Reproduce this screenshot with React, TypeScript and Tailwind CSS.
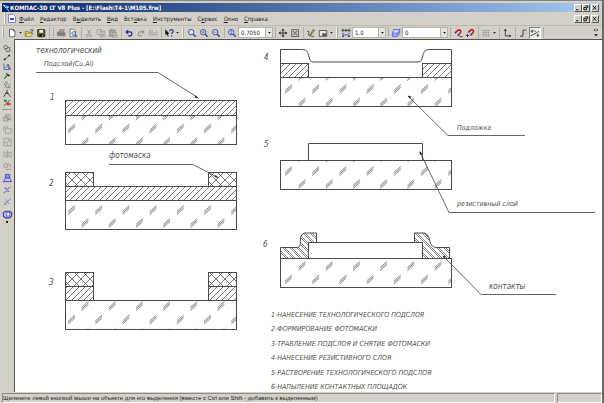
import type { ReactNode } from "react";

const UI = "font-['DejaVu_Sans_Condensed','Liberation_Sans',sans-serif]";

type IconName = keyof typeof icons;

const lens = (
  <>
    <circle cx="5" cy="5" r="3.2" fill="#dfeaf8" stroke="#2747a8" strokeWidth="1.1" />
    <path d="M7.4 7.4L10.4 10.4" stroke="#2747a8" strokeWidth="1.7" />
  </>
);

const icons = {
  create: <path d="M3 1.5h4.5l2 2v7H3zM7.5 1.5v2h2" fill="#fff" stroke="#444" strokeWidth=".9" />,
  open: (
    <>
      <path d="M1.5 10V4h3l1 1h4v1.5" fill="#e9d36b" stroke="#6b5a13" strokeWidth=".8" />
      <path d="M1.5 10L3.7 6.3h7L8.6 10z" fill="#f5e58b" stroke="#6b5a13" strokeWidth=".8" />
      <path d="M7 2.5c1.5-1.2 2.8-.6 3.2.8M10.6 1.6v2H8.8" stroke="#333" strokeWidth=".7" />
    </>
  ),
  save: (
    <>
      <path d="M2 2h8.5v8.5H3L2 9.5z" fill="#5c6620" stroke="#111" strokeWidth=".9" />
      <path d="M4 2.4h4.6v3.3H4z" fill="#eee" />
      <path d="M4 7.4h5v2.8H4z" fill="#111" />
      <path d="M7.4 8h1v1.8h-1z" fill="#ddd" />
    </>
  ),
  print: (
    <>
      <path d="M4 5l1-3h5L9 5" fill="#aaa69f" stroke="#77746e" strokeWidth=".8" />
      <path d="M1.5 5h8.3l1.2 1.4v3H2L1.5 8.6z" fill="#85827c" stroke="#6d6a65" strokeWidth=".6" />
    </>
  ),
  preview: (
    <>
      <path d="M2.5 1.5h4.5l2 2v7H2.5z" fill="#fff" stroke="#444" strokeWidth=".8" />
      <circle cx="6.8" cy="6.6" r="2.3" fill="#bfe0ef" stroke="#235b96" strokeWidth=".9" />
      <path d="M8.4 8.3l2.4 2.4" stroke="#235b96" strokeWidth="1.4" />
    </>
  ),
  cut: (
    <g stroke="#99958d" strokeWidth=".9">
      <path d="M4 1.5L7.4 8M8 1.5L4.6 8" />
      <circle cx="4" cy="9.2" r="1.3" />
      <circle cx="8" cy="9.2" r="1.3" />
    </g>
  ),
  copy: (
    <g fill="#d4d0c8" stroke="#918d86" strokeWidth=".8">
      <path d="M1.5 2h5v6h-5z" />
      <path d="M5 4h5.5v6.5H5zM6.3 6h3M6.3 7.4h3M6.3 8.8h3" />
    </g>
  ),
  paste: (
    <g stroke="#8b8780" strokeWidth=".8">
      <path d="M1.7 2.5h7v7.5h-7z" fill="#aaa69e" />
      <path d="M3.5 1.5h3.4v2H3.5z" fill="#d4d0c8" />
      <path d="M5.5 5.5h5V11h-5zM6.6 7.4h2.8M6.6 9h2.8" fill="#d4d0c8" />
    </g>
  ),
  undo: (
    <>
      <path d="M4 4.6h3.4c2.6 0 2.6 4.8 0 4.8H5" stroke="#1f2fa8" strokeWidth="1.7" />
      <path d="M1.4 4.7L5 1.6v6.2z" fill="#1f2fa8" />
    </>
  ),
  redo: (
    <>
      <path d="M8 4.6H4.8c-2.6 0-2.6 4.8 0 4.8H7" stroke="#96928b" strokeWidth="1.3" />
      <path d="M10.6 4.7L7.2 2v5.6z" fill="#96928b" />
    </>
  ),
  fx: (
    <g stroke="#96928b" strokeWidth=".9">
      <path d="M3.6 2.2C2 1.8 2.2 3.6 2 10M.8 5h2.6M5.4 3c-1.2 2-1.2 5 0 7M6.4 5.2l2.4 3.4M8.8 5.2L6.4 8.6M9.8 3c1.2 2 1.2 5 0 7" />
    </g>
  ),
  help: (
    <>
      <path d="M1.6 1.5v7.2l1.7-1.5 1.2 3 1.2-.6-1.2-2.8h2.1z" fill="#111" />
      <path d="M7 3.8c0-2.6 4-2.4 4 0 0 1.6-1.9 1.6-1.9 3.4" stroke="#2747a8" strokeWidth="1.4" />
      <path d="M8.4 8.6h1.5v1.5H8.4z" fill="#2747a8" />
    </>
  ),
  zoomFrame: lens,
  zoomIn: (
    <>
      {lens}
      <path d="M3.4 5h3.2M5 3.4v3.2" stroke="#b02030" strokeWidth=".9" />
    </>
  ),
  zoomOut: (
    <>
      {lens}
      <path d="M3.4 5h3.2" stroke="#b02030" strokeWidth=".9" />
    </>
  ),
  zoomScale: (
    <>
      {lens}
      <path d="M5 3v4M3.8 4.2L5 3l1.2 1.2M3.8 5.8L5 7l1.2-1.2" stroke="#2747a8" strokeWidth=".8" />
    </>
  ),
  pan: (
    <>
      <path d="M6 2v8M2 6h8" stroke="#222" strokeWidth="1" />
      <path d="M6 .8L8 3H4zM6 11.2L8 9H4zM.8 6L3 4v4zM11.2 6L9 4v4z" fill="#222" />
    </>
  ),
  fit: (
    <>
      <path d="M2 2h8.2v8.2H2z" stroke="#333" strokeWidth=".8" />
      <path d="M3.4 3.4l5.4 5.4M8.8 3.4L3.4 8.8" stroke="#333" strokeWidth=".9" />
      <path d="M5 5h2.2v2.2H5z" fill="#d4d0c8" stroke="#333" strokeWidth=".6" />
    </>
  ),
  pen: (
    <>
      <path d="M1.5 4.2c2-1 3 .6 1.6 2.4S3.6 9.6 6 9.4" stroke="#333" strokeWidth="1" />
      <path d="M4.6 8.4L8.8 1.6l1.6 1.2-4.6 6z" fill="#b3bd2d" stroke="#333" strokeWidth=".7" />
      <path d="M6 10h4" stroke="#333" strokeWidth=".8" />
    </>
  ),
  sheet: (
    <>
      <path d="M1.5 3h9v7h-9z" fill="#e8e6e0" stroke="#333" strokeWidth=".9" />
      <path d="M5 6.5h5v3H5z" fill="#555" />
    </>
  ),
  step: (
    <>
      <path d="M1 2.8h10M3 1l-2 1.8 2 1.8M9 1l2 1.8-2 1.8M6 1v3.6" stroke="#222" strokeWidth=".9" />
      <path d="M2.5 6v4M9.5 6v4M4 8.2h4" stroke="#3046b8" strokeWidth="1.1" />
      <path d="M1.2 9.2h2.6v1.6H1.2zM8.2 9.2h2.6v1.6H8.2z" fill="#3046b8" />
    </>
  ),
  layers: (
    <g fill="#cdd3ff" stroke="#3b48cf" strokeWidth=".8">
      <path d="M1.5 10.4l2-4.4h6l-2 4.4z" />
      <path d="M1.5 8.3l2-4.4h6l-2 4.4z" />
      <path d="M1.5 6.2l2-4.4h7l-2 4.4zM10.5 1.8v4.3L7.6 10.2" />
    </g>
  ),
  magnet: (
    <>
      <path d="M3.2 5.4L5.6 3c2.6-2 5 .6 3 3L6.4 8.4" stroke="#c5202c" strokeWidth="2" />
      <path d="M2.4 6.2l1.4-1.4M5.6 9.2L7 7.8" stroke="#2747a8" strokeWidth="2" />
      <path d="M7.6 10.3h3.6" stroke="#222" strokeWidth=".9" />
    </>
  ),
  magnetPoint: (
    <>
      <path d="M4.6 4.6L6.4 2.8c2.6-2 5 .6 3 3L7.4 8" stroke="#c5202c" strokeWidth="2" />
      <path d="M4 5.4l1.2-1.2M6.6 8.8L8 7.4" stroke="#2747a8" strokeWidth="2" />
      <path d="M1 9h4M3 7v4" stroke="#222" strokeWidth=".9" />
    </>
  ),
  grid: (
    <g stroke="#777" strokeWidth="1.1" strokeDasharray="1.2 1">
      <path d="M2 3h8.5M2 5.2h8.5M2 7.4h8.5M2 9.6h8.5" />
    </g>
  ),
  axes: (
    <>
      <path d="M4 2.5v7h6" stroke="#222" strokeWidth="1" />
      <path d="M4 .8l1.8 2.4H2.2zM11.2 9.5L9 7.8v3.4z" fill="#222" />
    </>
  ),
  ortho: <path d="M2.5 9.8H6V2.5h4" stroke="#333" strokeWidth="1.1" />,
  round: (
    <g stroke="#222" strokeWidth=".9">
      <path d="M1 9.5L11 4M2.5 1.8v4M.8 3.8h3.6M9.4 7v3.6M7.8 8.8h3.4M5 2.5l2 2" />
    </g>
  ),
  geometry: (
    <g stroke="#444" strokeWidth=".9">
      <circle cx="4.2" cy="4.2" r="2.4" />
      <path d="M4 6.8l5.4-2.6.8 5.2-4.6.8z" />
    </g>
  ),
  dimension: (
    <>
      <path d="M2 9.4l7-6" stroke="#333" strokeWidth=".9" />
      <path d="M1.4 10l1-3.2L4.6 9zM10.4 2L9.6 5 7.2 2.6z" fill="#222" />
    </>
  ),
  label: (
    <>
      <path d="M2 2v8h9" stroke="#3b48cf" strokeWidth="1" />
      <path d="M4 8l4-4M5.6 3.8h2.8v2.8" stroke="#222" strokeWidth=".9" />
      <path d="M7.6 7h3v2h-3z" fill="#3b48cf" />
    </>
  ),
  construction: (
    <>
      <path d="M2.2 10.6L7 4.8" stroke="#287a32" strokeWidth="1.6" />
      <path d="M4 2l6.4 3.6L8.4 7.6 5.6 4.8z" fill="#1c4a24" />
    </>
  ),
  edit: (
    <g stroke="#555" strokeWidth=".8">
      <path d="M2 6l3-4 2 1.6-3 4zM5 10.2h5M9 5v5M3 10.2l3-3" />
    </g>
  ),
  compass: <path d="M1.5 10.5L6 3.4l4.5 7.1M4.4 6h3.2M6 1v2.4" stroke="#333" strokeWidth="1.1" />,
  measure: (
    <>
      <path d="M2 2h3.6v3.4H2z" fill="#2b9a3a" />
      <path d="M1.8 10.4L10 2.6" stroke="#333" strokeWidth="1" />
      <path d="M5.6 6.4h5v3.4h-5z" fill="#d9323c" />
    </>
  ),
  group: (
    <g stroke="#89857e" strokeWidth=".9">
      <path d="M1.5 4.5h5v5h-5zM4 2h5v5H4zM7 8h3.6" />
    </g>
  ),
  move: (
    <g stroke="#9a968f" strokeWidth=".9">
      <path d="M3.5 4.5h7V10h-7zM1.5 7V2.5H6M4.8 1.2L6.2 2.5 4.8 3.8" />
    </g>
  ),
  scale: (
    <g stroke="#9a968f" strokeWidth=".9">
      <path d="M1.5 1.5h9v9h-9zM1.5 6.5h4v4M5.5 6.5l3-3M6 3.5h2.5V6" />
    </g>
  ),
  mirror: (
    <g stroke="#9a968f" strokeWidth=".9">
      <path d="M1.5 9.5V4h3v5.5zM6 1.5v9.5M7.6 9.5V4h3v5.5z" />
    </g>
  ),
  deform: (
    <g stroke="#89857e" strokeWidth=".9">
      <circle cx="4" cy="5.4" r="2.4" />
      <path d="M4 10h6M7 3c2 .4 3 2 2.4 4.6" />
    </g>
  ),
  fill: (
    <>
      <path d="M3.5 1.6h5v4.4h-5z" fill="#8f98e8" stroke="#3b48cf" strokeWidth="1" />
      <path d="M1.2 10.4L3.6 6h4.8l2.4 4.4z" fill="#c3c8f6" stroke="#3b48cf" strokeWidth="1.1" />
    </>
  ),
  trim: <path d="M1.5 9.8L9.5 2M2 4h3.4M5.6 7.6h2.6" stroke="#3b48cf" strokeWidth="1" />,
  split: <path d="M1.5 9.8L9.5 2M3.4 3l5 5.4M2 6.6l3 3" stroke="#5a62c4" strokeWidth=".9" />,
  contour: (
    <>
      <path d="M3.5 2.6h5l2.4 2v4l-2.4 2h-5l-2.4-2v-4z" fill="#b9beef" stroke="#2c39bd" strokeWidth="1.3" />
      <path d="M5 4h3.6v4.6H5z" fill="#eceafa" stroke="#444" strokeWidth=".7" />
    </>
  ),
};

function Icon({ name }: { name: IconName }) {
  return (
    <svg viewBox="0 0 12 12" className="size-full" fill="none" aria-hidden="true">
      {icons[name]}
    </svg>
  );
}

function Tool({ name, title, pressed }: { name: IconName; title: string; pressed?: boolean }) {
  return (
    <button
      type="button"
      aria-label={title}
      className={
        pressed
          ? "size-3 shrink-0 border border-[#808080] border-r-white border-b-white bg-[#efede8]"
          : "size-3 shrink-0 p-px"
      }
    >
      <Icon name={name} />
    </button>
  );
}

function Caret({ title }: { title: string }) {
  return (
    <button type="button" aria-label={title} className="flex h-3 w-[5px] shrink-0 items-center justify-center">
      <svg viewBox="0 0 4 3" className="h-[2px] w-[3px]" aria-hidden="true">
        <path d="M0 0h4L2 2.5z" fill="#222" />
      </svg>
    </button>
  );
}

function Sep() {
  return (
    <span className="flex w-1 shrink-0 justify-center">
      <span className="h-[11px] w-px bg-[#b2aea5]" />
    </span>
  );
}

function Grip() {
  return (
    <span className="flex w-[6px] shrink-0 justify-center">
      <span className="h-[11px] w-[2px] border-l border-[#f1efea] bg-[#aaa69e]" />
    </span>
  );
}

function Combo({ label, value, width }: { label: string; value: string; width: string }) {
  return (
    <span className={`relative flex h-[11px] shrink-0 border border-[#b7b3aa] bg-white ${width}`}>
      <select
        aria-label={label}
        className={`w-full appearance-none bg-transparent pl-[2px] text-[6px] leading-[9px] text-[#222] ${UI}`}
      >
        <option>{value}</option>
      </select>
      <span className="pointer-events-none absolute inset-y-0 right-0 flex w-[7px] items-center justify-center border-l border-[#b7b3aa] bg-[#e6e3dc]">
        <svg viewBox="0 0 4 3" className="h-[2px] w-[3px]" aria-hidden="true">
          <path d="M0 0h4L2 2.5z" fill="#111" />
        </svg>
      </span>
    </span>
  );
}

function WindowButtons() {
  const marks = [
    { title: "Свернуть", d: "M1 5.5h3" },
    { title: "Восстановить", d: "M2.5 1h3v2.5M1 2.8h3v2.7H1z" },
    { title: "Закрыть", d: "M1 1l4 4.5M5 1L1 5.5" },
  ];
  return (
    <span className="flex shrink-0">
      {marks.map((m) => (
        <button
          key={m.title}
          type="button"
          aria-label={m.title}
          className="h-2 w-2 border border-white border-r-[#555] border-b-[#555] bg-[#d4d0c8] last:ml-px"
        >
          <svg viewBox="0 0 7 7" className="size-full" fill="none" stroke="#000" aria-hidden="true">
            <path d={m.d} />
          </svg>
        </button>
      ))}
    </span>
  );
}

const menu: [string, string, string][] = [
  ["", "Ф", "айл"],
  ["", "Р", "едактор"],
  ["В", "ы", "делить"],
  ["", "В", "ид"],
  ["Вст", "а", "вка"],
  ["", "И", "нструменты"],
  ["С", "е", "рвис"],
  ["", "О", "кно"],
  ["", "С", "правка"],
];

const panelTools: [IconName, string][] = [
  ["geometry", "Геометрия"],
  ["dimension", "Размеры"],
  ["label", "Обозначения"],
  ["construction", "Построения"],
  ["edit", "Редактирование"],
  ["compass", "Параметризация"],
  ["measure", "Измерения"],
];

const editTools: [IconName, string][] = [
  ["group", "Сдвиг"],
  ["move", "Поворот"],
  ["scale", "Масштабирование"],
  ["mirror", "Симметрия"],
  ["deform", "Деформация"],
  ["fill", "Копирование"],
  ["trim", "Усечь кривую"],
  ["split", "Разбить кривую"],
  ["contour", "Очистить область"],
];

const LINE = "#4a4a4a";

/** Glass substrate: rows of short oblique strokes, alternate rows shifted by half a step. */
function Substrate({ id, x, y, width, rows }: { id: string; x: number; y: number; width: number; rows: [number, number][] }) {
  const strokes: string[] = [];
  for (const [dx, dy] of rows) {
    for (let cx = x + dx; cx < x + width + 4; cx += 27.2) {
      for (const k of [-1.6, 0, 1.6]) {
        strokes.push(`M${cx - 3.4} ${y + dy + k + 3}L${cx + 3.4} ${y + dy + k - 3}`);
      }
    }
  }
  return (
    <g>
      <clipPath id={id}>
        <rect x={x} y={y} width={width} height="29" />
      </clipPath>
      <path d={strokes.join("")} stroke="#666" strokeWidth=".7" clipPath={`url(#${id})`} />
      <rect x={x} y={y} width={width} height="29" stroke={LINE} />
    </g>
  );
}

function Block({ x, y, width, height, hatch }: { x: number; y: number; width: number; height: number; hatch: string }) {
  return <rect x={x} y={y} width={width} height={height} fill={`url(#${hatch})`} stroke={LINE} />;
}

const wideLabels: [number, number, string][] = [
  [36, 53, "технологический"],
  [109, 158, "фотомаска"],
  [489, 289, "контакты"],
];

const labels: [number, number, string][] = [
  [44, 66, "Подслой(Cu,Al)"],
  [457, 130, "Подложка"],
  [457, 206, "резистивный слой"],
];

const figures: [number, number, string][] = [
  [50, 100, "1"],
  [49, 186, "2"],
  [49, 285, "3"],
  [264, 60, "4"],
  [264, 147, "5"],
  [263, 247, "6"],
];

const legend = [
  "1-НАНЕСЕНИЕ ТЕХНОЛОГИЧЕСКОГО ПОДСЛОЯ",
  "2-ФОРМИРОВАНИЕ ФОТОМАСКИ",
  "3-ТРАВЛЕНИЕ ПОДСЛОЯ И СНЯТИЕ ФОТОМАСКИ",
  "4-НАНЕСЕНИЕ РЕЗИСТИВНОГО СЛОЯ",
  "5-РАСТВОРЕНИЕ ТЕХНОЛОГИЧЕСКОГО ПОДСЛОЯ",
  "6-НАПЫЛЕНИЕ КОНТАКТНЫХ ПЛОЩАДОК",
];

function Drawing() {
  return (
    <svg viewBox="15 40 587 352" preserveAspectRatio="xMinYMin meet" className="block w-full" fill="none">
      <defs>
        <pattern id="metal" width="6" height="6" patternUnits="userSpaceOnUse">
          <path d="M-1 7L7 -1M-1 1L1 -1M5 7L7 5" stroke="#555" strokeWidth=".8" />
        </pattern>
        <pattern id="mask" width="9" height="9" patternUnits="userSpaceOnUse">
          <path d="M-1 10L10 -1M-1 -1L10 10" stroke="#555" strokeWidth=".8" />
        </pattern>
        <pattern id="contact" width="7" height="7" patternUnits="userSpaceOnUse">
          <path d="M-1 -1L8 8M1 -1L8 6M-1 4L3 8M-1 6L1 8" stroke="#555" strokeWidth=".7" />
        </pattern>
      </defs>

      <Block x={65.5} y={100.5} width={171} height={15} hatch="metal" />
      <Substrate id="s1" x={65.5} y={115.5} width={171} rows={[[19.5, 0], [6, 13], [19.5, 26.5]]} />

      <Block x={65.5} y={172.5} width={28} height={14} hatch="mask" />
      <Block x={208.5} y={172.5} width={28} height={14} hatch="mask" />
      <Block x={65.5} y={186.5} width={171} height={14} hatch="metal" />
      <Substrate id="s2" x={65.5} y={200.5} width={171} rows={[[6, 9.5], [19.5, 22.5]]} />

      <Block x={65.5} y={272.5} width={28} height={14} hatch="mask" />
      <Block x={208.5} y={272.5} width={28} height={14} hatch="mask" />
      <Block x={65.5} y={286.5} width={28} height={14} hatch="metal" />
      <Block x={208.5} y={286.5} width={28} height={14} hatch="metal" />
      <Substrate id="s3" x={65.5} y={300.5} width={171} rows={[[19.5, 5.5], [6, 19], [19.5, 32.5]]} />

      <path d="M280.5 77V49.5H302.5c9 0 4 12.5 11 12.5H418c7 0 2-12.5 11-12.5H451.5V77" stroke={LINE} />
      <Block x={280.5} y={63.5} width={28} height={14} hatch="metal" />
      <Block x={422.5} y={63.5} width={29} height={14} hatch="metal" />
      <Substrate id="s4" x={280.5} y={77.5} width={171} rows={[[21.5, -1.5], [8, 11.5], [21.5, 25]]} />

      <path d="M308.5 160V143.5H422.5V160" stroke={LINE} />
      <Substrate id="s5" x={280.5} y={160.5} width={171} rows={[[21.5, -3], [8, 10.5], [21.5, 23.5]]} />

      <path d="M308.5 258V242.5H422.5V258" stroke={LINE} />
      <path
        d="M280.5 258.5V247.5H296c7 0 3-7 5-11.5q1.5-3 4-3H316.5V242.5H308.5V258.5z"
        fill="url(#contact)"
        stroke={LINE}
      />
      <path
        d="M449.5 258.5V247.5H437c-8 0-6-7-9-11.5q-1.5-3-4-3H414.500V242.5H422.5V258.5z"
        fill="url(#contact)"
        stroke={LINE}
      />
      <Substrate id="s6" x={280.5} y={258.5} width={171} rows={[[21.5, 7.5], [8, 21]]} />

      <g stroke="#555" strokeWidth=".9">
        <path d="M36 72.5H158L197 97" />
        <path d="M109 164.5H193L217 177" />
        <path d="M408 96L448 135.5H525" />
        <path d="M420 152L449 212.5H595" />
        <path d="M443 256L481 294.5H556" />
      </g>
      <path
        d="M199 98.5l-4.500-1 1.200-2zM219 178l-4.500-1 1-2zM408 95.5l3.500 1.200-2 2zM419.500 151l2.800 2.800-2.400 1.200zM442.500 255.500l3.500 1.200-2 2z"
        fill="#222"
      />

      <g className="font-['DejaVu_Sans_Condensed','Liberation_Sans',sans-serif] italic" fill="#505050">
        {wideLabels.map(([x, y, text]) => (
          <text key={text} x={x} y={y} className="text-[8px]">
            {text}
          </text>
        ))}
        {labels.map(([x, y, text]) => (
          <text key={text} x={x} y={y} className="text-[7px]">
            {text}
          </text>
        ))}
        {figures.map(([x, y, text]) => (
          <text key={text} x={x} y={y} className="text-[8px]">
            {text}
          </text>
        ))}
        {legend.map((text, i) => (
          <text key={text} x={271} y={317 + i * 14.4} className="text-[7px]">
            {text}
          </text>
        ))}
      </g>
    </svg>
  );
}

function Bar({ children, className }: { children: ReactNode; className: string }) {
  return <div className={`flex items-center ${className}`}>{children}</div>;
}

export default function App() {
  return (
    <div className={`flex min-h-screen flex-col border-r-2 border-[#6b6a62] bg-[#d4d0c8] text-[#222] ${UI}`}>
      <header className="border-t border-[#85837b] pt-[2px]">
        <Bar className="mx-[2px] h-[9px] bg-linear-to-r from-[#0a246a] to-[#a6caf0] pr-px">
          <svg viewBox="0 0 8 8" className="size-2 shrink-0" fill="none" aria-hidden="true">
            <path d="M1 1l6 2-3 1zM4 3l3 4.500" stroke="#8fd0ff" strokeWidth="1" />
          </svg>
          <h1 className="flex-1 truncate text-[6px] leading-[9px] font-bold text-white">
            КОМПАС-3D LT V8 Plus - [E:\Flash\T4-1\M105.frw]
          </h1>
          <WindowButtons />
        </Bar>

        <Bar className="h-[14px] border-b border-[#bdb9b0] pr-[3px] pl-[2px]">
          <Grip />
          <svg viewBox="0 0 8 9" className="h-[9px] w-2 shrink-0" fill="none" aria-hidden="true">
            <path d="M.5.5h5l2 2v6h-7z" fill="#fff" stroke="#7c86d8" />
            <path d="M2 4h4v2H2z" fill="#3b48cf" />
          </svg>
          <nav className="ml-[3px] flex flex-1 gap-[6px] text-[6px] leading-[9px]">
            {menu.map(([before, key, after]) => (
              <button key={key + after} type="button">
                {before}
                <u>{key}</u>
                {after}
              </button>
            ))}
          </nav>
          <WindowButtons />
        </Bar>

        <Bar className="h-[13px] pr-[3px]">
          <Grip />
          <Tool name="create" title="Создать" />
          <Caret title="Создать документ" />
          <Tool name="open" title="Открыть" />
          <Tool name="save" title="Сохранить" />
          <Sep />
          <Sep />
          <Tool name="print" title="Печать" />
          <Tool name="preview" title="Предварительный просмотр" />
          <Sep />
          <Tool name="cut" title="Вырезать" />
          <Tool name="copy" title="Копировать" />
          <Tool name="paste" title="Вставить" />
          <Sep />
          <Tool name="undo" title="Отменить" />
          <Tool name="redo" title="Повторить" />
          <Tool name="fx" title="Переменные" />
          <Sep />
          <Tool name="help" title="Справка" />
          <Caret title="Настройка панели" />
          <Grip />
          <Tool name="zoomFrame" title="Увеличить масштаб рамкой" />
          <Tool name="zoomIn" title="Увеличить масштаб" />
          <Tool name="zoomOut" title="Уменьшить масштаб" />
          <Sep />
          <Tool name="zoomScale" title="Масштаб по выделенным объектам" />
          <Combo label="Текущий масштаб" value="0.7050" width="w-[35px]" />
          <Sep />
          <Tool name="pan" title="Сдвинуть" />
          <Tool name="fit" title="Показать все" />
          <Sep />
          <Tool name="pen" title="Обновить изображение" />
          <Tool name="sheet" title="Режим отображения" />
          <Caret title="Настройка вида" />
          <Grip />
          <Tool name="step" title="Шаг курсора" />
          <Combo label="Шаг курсора" value="1.0" width="w-[34px]" />
          <Sep />
          <Tool name="layers" title="Слои" />
          <Combo label="Состояние слоёв" value="0" width="w-[46px]" />
          <Sep />
          <Tool name="magnet" title="Привязки" />
          <Tool name="magnetPoint" title="Настройка привязок" />
          <Sep />
          <Tool name="grid" title="Сетка" />
          <Caret title="Настройка сетки" />
          <Sep />
          <Tool name="axes" title="Локальная система координат" />
          <Sep />
          <Tool name="ortho" title="Ортогональное черчение" />
          <Tool name="round" title="Округление" pressed />
          <Sep />
          <span className="flex-1" />
          <button type="button" aria-label="Другие кнопки" className="h-[9px] w-[6px] shrink-0">
            <svg viewBox="0 0 7 11" className="size-full" fill="none" aria-hidden="true">
              <path d="M1 1l1.500 1.500L1 4M4 1l1.500 1.500L4 4" stroke="#111" />
              <path d="M1 7.500h5L3.500 10z" fill="#111" />
            </svg>
          </button>
        </Bar>
      </header>

      <div className="flex flex-1">
        <aside className="flex w-[14px] shrink-0 flex-col items-center pt-[5px]">
          {panelTools.map(([name, title]) => (
            <button key={name} type="button" aria-label={title} className="h-[9px] w-[10px]">
              <Icon name={name} />
            </button>
          ))}
          <span className="my-[2px] h-px w-[10px] bg-[#9b978f]" />
          {editTools.map(([name, title]) => (
            <button key={name} type="button" aria-label={title} className="h-3 w-[11px] py-px">
              <Icon name={name} />
            </button>
          ))}
          <span className="mt-px size-[2px] bg-[#222]" />
        </aside>
        <main className="flex-1 border-t border-l border-[#55534e] bg-white">
          <Drawing />
        </main>
      </div>

      <footer className="flex gap-[2px] pt-px pl-[2px] font-['Liberation_Sans',sans-serif] text-[6px] leading-[8px]">
        <p className="flex-1 truncate border border-[#8e8b84] border-r-white border-b-white">
          Щелкните левой кнопкой мыши на объекте для его выделения (вместе с Ctrl или Shift - добавить к выделенным)
        </p>
        <span className="w-[45px] border border-[#8e8b84] border-r-white border-b-white" />
      </footer>
    </div>
  );
}
